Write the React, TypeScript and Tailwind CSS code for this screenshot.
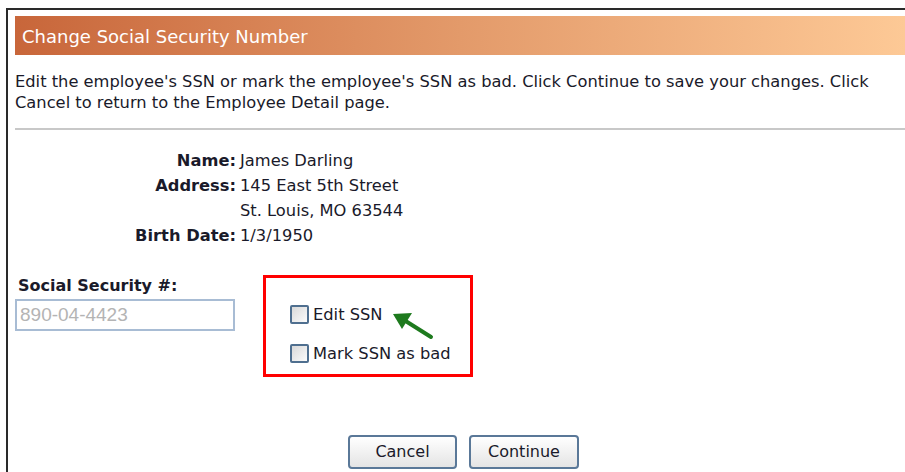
import React from "react";

const font = { fontFamily: '"DejaVu Sans", Tahoma, Verdana, sans-serif' };

function Checkbox() {
  return (
    <span className="inline-block w-[19px] h-[19px] border-2 border-[#4f6f8f] rounded-[2px] bg-gradient-to-br from-[#d9d9d9] to-[#fbfbfb] shrink-0" />
  );
}

function Arrow() {
  return (
    <svg width="46" height="32" viewBox="0 0 46 32" className="absolute left-[390px] top-[309px]">
      <line x1="41" y1="28" x2="14" y2="11" stroke="#1e7a1e" strokeWidth="4" strokeLinecap="round" />
      <polygon points="3,5 22,4 12,20" fill="#1e7a1e" />
    </svg>
  );
}

export default function App() {
  return (
    <div className="relative w-[905px] h-[472px] bg-white overflow-hidden" style={font}>
      <div className="absolute left-[6px] top-[8px] w-[920px] h-[480px] border-l-2 border-t-2 border-[#2a2a2a]" />
      <div className="pt-[16px] pl-[15px]">
        <div className="h-[39px] flex items-center pl-[7px] pt-[2px] bg-gradient-to-r from-[#c8663a] via-[#e39a6a] to-[#fdc996] text-white text-[18px]">
          Change Social Security Number
        </div>
        <p className="mt-[16px] text-[16.3px] leading-[21px] text-[#1a1a2a]">
          Edit the employee's SSN or mark the employee's SSN as bad. Click Continue to save your changes. Click
          <br />
          Cancel to return to the Employee Detail page.
        </p>
        <div className="mt-[15px] h-[2px] bg-[#c8c8c8]" />
        <div className="mt-[18px] grid grid-cols-[221px_1fr] gap-x-[4px] text-[16.3px] leading-[25px] text-[#1a1a2a]">
          <span className="text-right font-bold">Name:</span>
          <span>James Darling</span>
          <span className="text-right font-bold">Address:</span>
          <span>145 East 5th Street</span>
          <span />
          <span>St. Louis, MO 63544</span>
          <span className="text-right font-bold">Birth Date:</span>
          <span>1/3/1950</span>
        </div>
        <div className="mt-[17px] flex items-start">
          <div className="pt-[11px] w-[248px]">
            <div className="font-bold text-[16px] leading-[20px] text-[#1a1a2a] pl-[3px]">Social Security #:</div>
            <div className="mt-[3px] w-[220px] h-[32px] border-2 border-[#a8bcd4] flex items-center pl-[3px] text-[19px] text-[#b4b4b4]" style={{ fontFamily: '"Liberation Sans", Arial, sans-serif' }}>
              890-04-4423
            </div>
          </div>
          <div className="mt-[10px] w-[210px] h-[102px] border-[3px] border-[#ff0000] pl-[24px] pt-[27px] flex flex-col gap-[20px] text-[16.3px] text-[#1a1a2a]">
            <label className="flex items-center gap-[4px] leading-[19px]">
              <Checkbox />
              <span>Edit SSN</span>
            </label>
            <label className="flex items-center gap-[4px] leading-[19px]">
              <Checkbox />
              <span>Mark SSN as bad</span>
            </label>
          </div>
        </div>
        <div className="mt-[58px] flex gap-[12px] pl-[333px] text-[16px]">
          <button className="w-[109px] h-[34px] rounded-[4px] border-2 border-[#5a7898] bg-gradient-to-b from-white to-[#e4e4e4] text-[#1a1a2a]">Cancel</button>
          <button className="w-[110px] h-[34px] rounded-[4px] border-2 border-[#5a7898] bg-gradient-to-b from-white to-[#e4e4e4] text-[#1a1a2a]">Continue</button>
        </div>
      </div>
      <Arrow />
    </div>
  );
}
